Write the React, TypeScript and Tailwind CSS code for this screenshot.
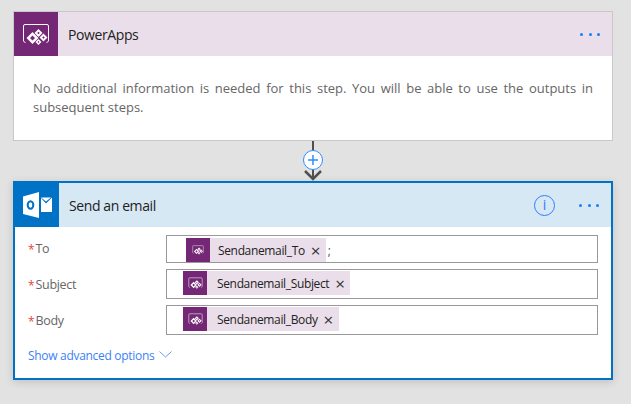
const font = { fontFamily: '"Open Sans", "Noto Sans", sans-serif' };

function Diamond({ cx, cy, r, hole }: { cx: number; cy: number; r: number; hole: number }) {
  const shape = (s: number) => `M${cx} ${cy - s} L${cx + s} ${cy} L${cx} ${cy + s} L${cx - s} ${cy} Z`;
  return <path d={`${shape(r)} ${shape(hole)}`} fill="white" fillRule="evenodd" />;
}

function PowerAppsIcon({ size = 28 }: { size?: number }) {
  return (
    <svg width={size} height={size * 0.8} viewBox="0 0 28 22.400" fill="none">
      <path d="M3.500 20 L1.500 18 V3 Q1.500 1.500 3 1.500 H25 Q26.500 1.500 26.500 3 V18 L24.500 20" stroke="white" strokeWidth="1" />
      <Diamond cx={10.500} cy={15} r={6} hole={2.500} />
      <Diamond cx={16.500} cy={10} r={4} hole={1.300} />
      <Diamond cx={21.500} cy={14.500} r={4} hole={1.300} />
      <Diamond cx={16.500} cy={19} r={3} hole={1} />
    </svg>
  );
}

function OutlookIcon() {
  return (
    <svg width="44" height="44" viewBox="0 0 44 44">
      <path d="M8 13.500 L24 9 V35 L8 31 Z" fill="white" />
      <path d="M26 15 L31 20.500 L37 14.500 V29 H26 Z" fill="white" />
      <path d="M26 14.500 H36 L31 18.500 Z" fill="white" />
      <ellipse cx="15.500" cy="22" rx="2.800" ry="3.800" fill="none" stroke="#0072c6" strokeWidth="2" />
    </svg>
  );
}

function Dots() {
  return (
    <div className="flex gap-[5.500px]">
      <span className="w-[3px] h-[3px] rounded-full bg-[#1a7cff]" />
      <span className="w-[3px] h-[3px] rounded-full bg-[#1a7cff]" />
      <span className="w-[3px] h-[3px] rounded-full bg-[#1a7cff]" />
    </div>
  );
}

function Connector() {
  return (
    <div className="w-[600px] h-[40px] flex justify-center">
      <svg width="24" height="40" viewBox="0 0 24 40" fill="none">
        <path d="M12 0 V39" stroke="#505050" strokeWidth="2" />
        <path d="M4 30 L12 38 L20 30" stroke="#505050" strokeWidth="2.500" />
        <circle cx="12" cy="19" r="9.500" fill="white" stroke="#2f8cff" strokeWidth="1" />
        <path d="M7 19 H17 M12 14 V24" stroke="#2f8cff" strokeWidth="1.500" />
      </svg>
    </div>
  );
}

function Token({ name, small }: { name: string; small?: boolean }) {
  return (
    <div className="flex items-center bg-[#eadeea] h-[24px]">
      <div className="w-[24px] h-[24px] bg-[#742774] flex items-center justify-center">
        <PowerAppsIcon size={small ? 12 : 15} />
      </div>
      <span className={small ? "ml-[8px] pt-[1px] text-[12px] tracking-[-0.35px] text-[#222]" : "ml-[10px] pt-[1px] text-[12px] tracking-[-0.35px] text-[#222]"}>
        {name}
      </span>
      <span className="ml-[6px] mr-[6px] w-[9px] pt-[1px] text-center text-[17px] leading-none text-[#333]">×</span>
    </div>
  );
}

function FieldRow({ label, name, to }: { label: string; name: string; to?: boolean }) {
  return (
    <div className="flex items-center">
      <div className={to ? "w-[138px] flex items-center text-[12.500px] tracking-[-0.3px] pt-[1px] text-[#666]" : "w-[138px] flex items-center text-[12.500px] tracking-[-0.3px] pt-[3px] text-[#666]"}>
        <span className="text-[#e8443a] w-[7.500px] text-[12px]">*</span>
        {label}
      </div>
      <div className={to ? "flex-1 h-[28px] border border-[#999] flex items-end pl-[19px]" : "flex-1 h-[30px] border border-[#999] flex items-start pt-[1px] pl-[16px]"}>
        <Token name={name} small={to} />
        {to && <span className="ml-[2px] mb-[2px] text-[12px] text-[#555]">;</span>}
      </div>
    </div>
  );
}

export default function App() {
  return (
    <div className="w-[631px] h-[404px] overflow-hidden bg-[#e2e2e2] pt-[11px] px-[13px]" style={font}>
      {/* PowerApps step */}
      <div className="w-[600px] h-[130px] bg-white border border-[#c8c8c8]">
        <div className="h-[44px] flex items-center bg-[#eadeea]">
          <div className="w-[44px] h-[44px] bg-[#742774] flex items-center justify-center">
            <PowerAppsIcon />
          </div>
          <span className="ml-[10px] text-[14px] tracking-[-0.4px] text-[#222]">PowerApps</span>
          <div className="ml-auto mr-[12px]">
            <Dots />
          </div>
        </div>
        <p className="mt-[23px] mx-[19px] text-[13px] leading-[19px] text-[#666] text-justify">
          No additional information is needed for this step. You will be able to use the outputs in subsequent steps.
        </p>
      </div>

      <Connector />

      {/* Send an email step */}
      <div className="w-[600px] h-[199px] bg-white border-2 border-[#0072c6] shadow-[0_2px_8px_rgba(0,0,0,0.15)]">
        <div className="h-[44px] flex items-center bg-[#d7e8f5]">
          <div className="w-[44px] h-[44px] bg-[#0072c6] flex items-center justify-center">
            <OutlookIcon />
          </div>
          <span className="ml-[10px] text-[14px] tracking-[-0.4px] text-[#222]">Send an email</span>
          <div className="ml-auto w-[21px] h-[21px] rounded-full border-[1.500px] border-[#2f7cff] flex items-center justify-center text-[#2f7cff] text-[14px] leading-none">
            i
          </div>
          <div className="ml-[24px] mr-[12px]">
            <Dots />
          </div>
        </div>
        <div className="flex flex-col gap-[6px] pt-[8px] px-[13px]">
          <FieldRow label="To" name="Sendanemail_To" to />
          <FieldRow label="Subject" name="Sendanemail_Subject" />
          <FieldRow label="Body" name="Sendanemail_Body" />
        </div>
        <div className="mt-[12px] ml-[13px] flex items-center gap-[5px] text-[12px] tracking-[-0.3px] text-[#3b82f6]">
          Show advanced options
          <svg width="13" height="7" viewBox="0 0 13 7" fill="none" className="mb-[3px]">
            <path d="M0.500 0.500 L6.500 6 L12.500 0.500" stroke="#6b9cf5" strokeWidth="1" />
          </svg>
        </div>
      </div>
    </div>
  );
}
